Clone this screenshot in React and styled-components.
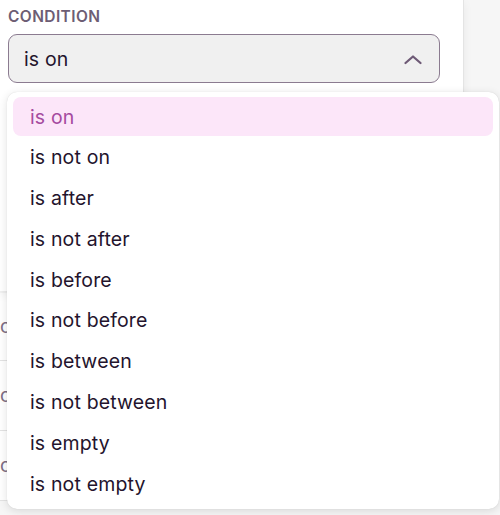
import styled, { createGlobalStyle } from "styled-components";

const GlobalStyle = createGlobalStyle`
    body {
        margin: 0;
        background-color: #f6f6f6;
        font-family: Inter, "Noto Sans", sans-serif;
        -webkit-font-smoothing: antialiased;
    }
`;

const options = [
    'is on',
    'is not on',
    'is after',
    'is not after',
    'is before',
    'is not before',
    'is between',
    'is not between',
    'is empty',
    'is not empty',
];

const Page = styled.div`
    position: relative;
    width: 500px;
    height: 515px;
    overflow: hidden;
`;

const Panel = styled.div`
    width: 463px;
    height: 291px;
    background-color: #fff;
    box-shadow: 1px 0 0 #e4e4e4, 0 3px 10px rgba(0, 0, 0, 0.07);
    padding: 8px 0 0 8px;
    box-sizing: border-box;
    position: relative;
    z-index: 1;
`;

const Label = styled.div`
    font-size: 15.5px;
    font-weight: 600;
    letter-spacing: 0.4px;
    color: #6d5d74;
    line-height: 18px;
    margin-bottom: 8px;
`;

const SelectWrap = styled.div`
    position: relative;
    width: 432px;
`;

const SelectBox = styled.div`
    display: flex;
    align-items: center;
    justify-content: space-between;
    height: 49px;
    box-sizing: border-box;
    padding: 0 16px 0 15px;
    border: 1.5px solid #8b7b90;
    border-radius: 9px;
    background-color: #f0f0f0;
    font-size: 19.5px;
    letter-spacing: 0.15px;
    color: #24142d;
`;

const Menu = styled.ul`
    position: absolute;
    top: 58px;
    left: -1px;
    width: 492px;
    margin: 0;
    padding: 5px 6px 4px;
    box-sizing: border-box;
    list-style: none;
    background-color: #fff;
    border-radius: 10px;
    box-shadow: 0 2px 10px rgba(0, 0, 0, 0.12), 0 0 1px rgba(0, 0, 0, 0.15);
    z-index: 5;
`;

const Option = styled.li`
    height: 39px;
    margin-bottom: 1.8px;
    display: flex;
    align-items: center;
    padding-left: 17px;
    border-radius: 8px;
    font-size: 19.5px;
    letter-spacing: 0.15px;
    color: ${p => p.$active ? '#a54b9f' : '#24142d'};
    background-color: ${p => p.$active ? '#fce6f9' : 'transparent'};
`;

const Rows = styled.div`
    width: 463px;
    background-color: #fff;
    margin-top: 2px;
`;

const Row = styled.div`
    height: 70px;
    box-sizing: border-box;
    border-bottom: 1px solid #e3e3e3;
    display: flex;
    align-items: center;
    padding-left: 0;
    font-size: 19px;
    color: #7d6d84;
    &:first-child { height: 68px; }
`;

function ChevronUp() {
    return (
        <svg width="20" height="12" viewBox="0 0 20 12" fill="none">
            <path d="M2.5 10 L10 3.5 L17.5 10" stroke="#6e5a76" strokeWidth="2.3" strokeLinecap="round" strokeLinejoin="round"/>
        </svg>
    );
}

export default function App() {
    return (
        <Page>
            <GlobalStyle/>
            <Panel>
                <Label>CONDITION</Label>
                <SelectWrap>
                    <SelectBox>
                        <span>is on</span>
                        <ChevronUp/>
                    </SelectBox>
                    <Menu>
                        {options.map((o, idx) => <Option key={o} $active={idx === 0}>{o}</Option>)}
                    </Menu>
                </SelectWrap>
            </Panel>
            <Rows>
                <Row>ooo</Row>
                <Row>ooo</Row>
                <Row>ooo</Row>
            </Rows>
        </Page>
    );
}
